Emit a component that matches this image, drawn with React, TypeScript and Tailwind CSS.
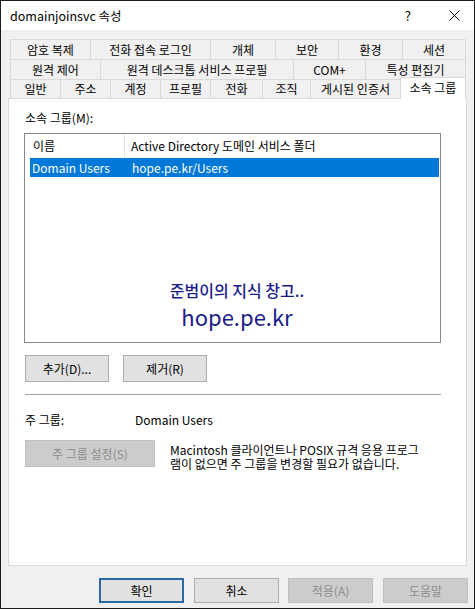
import React from "react";

const row1 = [
  { label: "암호 복제", w: "w-[80px]" },
  { label: "전화 접속 로그인", w: "w-[120px]" },
  { label: "개체", w: "w-[65px]" },
  { label: "보안", w: "w-[63px]" },
  { label: "환경", w: "w-[64px]" },
  { label: "세션", w: "w-[64px]" },
];

const row2 = [
  { label: "원격 제어", w: "w-[90px]" },
  { label: "원격 데스크톱 서비스 프로필", w: "w-[193px]" },
  { label: "COM+", w: "w-[72px]" },
  { label: "특성 편집기", w: "w-[101px]" },
];

const row3 = [
  { label: "일반", w: "w-[50px]" },
  { label: "주소", w: "w-[50px]" },
  { label: "계정", w: "w-[50px]" },
  { label: "프로필", w: "w-[50px]" },
  { label: "전화", w: "w-[52px]" },
  { label: "조직", w: "w-[48px]" },
  { label: "게시된 인증서", w: "w-[90px]" },
];

type Tab = { label: string; w: string };

const TabRow = ({ tabs, h, last }: { tabs: Tab[]; h: string; last?: boolean }) => (
  <div className="flex">
    {tabs.map((t, i) => (
      <div
        key={t.label}
        className={`${t.w} ${h} flex items-center justify-center border-l border-t border-[#d9d9d9] ${
          last && i === tabs.length - 1 ? "border-r" : ""
        }`}
      >
        {t.label}
      </div>
    ))}
  </div>
);

const App = () => {
  return (
    <div className="w-[475px] h-[609px] border border-[#1a1a1a] bg-[#f0f0f0] flex flex-col text-[12px] leading-[16px] text-black font-['Noto_Sans_CJK_KR',sans-serif]">
      {/* title bar */}
      <div className="h-[29px] bg-white flex items-center shrink-0">
        <div className="pl-[9px] text-[12.5px]">domainjoinsvc 속성</div>
        <div className="ml-auto flex items-center">
          <span className="text-[13px] mr-[38px]">?</span>
          <svg width="11" height="11" viewBox="0 0 11 11" className="mr-[14px]">
            <path d="M0.5 0.5 L10.5 10.5 M10.5 0.5 L0.5 10.5" stroke="#000" strokeWidth="1" />
          </svg>
        </div>
      </div>

      <div className="pl-[7px] pt-[9px] flex flex-col">
        {/* tabs */}
        <div className="ml-[2px] w-[456px]">
          <TabRow tabs={row1} h="h-[20px]" last />
          <TabRow tabs={row2} h="h-[20px]" last />
          <div className="flex items-end h-[19px]">
            {row3.map((t) => (
              <div
                key={t.label}
                className={`${t.w} h-[19px] flex items-center justify-center border-l border-t border-[#d9d9d9]`}
              >
                {t.label}
              </div>
            ))}
            <div className="w-[66px] h-[22px] -mb-[1px] relative z-10 bg-white border-l border-t border-r border-[#d9d9d9] flex items-center justify-center pb-[1px]">
              소속 그룹
            </div>
          </div>
        </div>

        {/* panel */}
        <div className="w-[459px] h-[468px] bg-white border border-[#d9d9d9] pl-[15px] flex flex-col">
          <div className="mt-[11px] pl-[1px]">소속 그룹(M):</div>

          <div className="mt-[7px] w-[417px] h-[210px] border border-[#828790] relative">
            <div className="flex h-[24px] items-center">
              <div className="w-[100px] h-full pl-[8px] flex items-center border-r border-[#e5e5e5]">이름</div>
              <div className="pl-[6px]">Active Directory 도메인 서비스 폴더</div>
            </div>
            <div className="ml-[5px] mr-[1px] h-[19px] bg-[#0078d7] text-white flex items-center">
              <div className="w-[102px] pl-[2px]">Domain Users</div>
              <div>hope.pe.kr/Users</div>
            </div>

            {/* watermark */}
            <div className="absolute left-0 right-0 top-[145px] pl-[9px] flex flex-col items-center text-[#1c1c8c]">
              <div className="text-[16px] leading-[22px] font-medium">준범이의 지식 창고..</div>
              <div className="text-[22px] leading-[28px] mt-[1px]">hope.pe.kr</div>
            </div>
          </div>

          <div className="mt-[12px] flex pl-[1px]">
            <button className="w-[84px] h-[27px] bg-[#e1e1e1] border border-[#adadad]">추가(D)...</button>
            <button className="w-[84px] h-[27px] ml-[14px] bg-[#e1e1e1] border border-[#adadad]">제거(R)</button>
          </div>

          <div className="mt-[12px] ml-[1px] w-[416px] h-px bg-[#a0a0a0]" />

          <div className="mt-[17px] flex pl-[1px]">
            <div className="w-[110px]">주 그룹:</div>
            <div>Domain Users</div>
          </div>

          <div className="mt-[12px] flex pl-[1px]">
            <button className="w-[130px] h-[27px] bg-[#cccccc] border border-[#bfbfbf] text-[#8c8c8c] shrink-0">
              주 그룹 설정(S)
            </button>
            <div className="ml-[15px] mt-[3px] flex flex-col">
              <div className="h-[14px] leading-[14px]">Macintosh 클라이언트나 POSIX 규격 응용 프로그</div>
              <div className="h-[14px] leading-[14px]">램이 없으면 주 그룹을 변경할 필요가 없습니다.</div>
            </div>
          </div>
        </div>

        {/* dialog buttons */}
        <div className="mt-[12px] flex ml-[91px]">
          <button className="w-[85px] h-[25px] bg-[#e1e1e1] border-2 border-[#2a6aa0]">확인</button>
          <button className="w-[85px] h-[25px] ml-[10px] bg-[#e1e1e1] border border-[#adadad]">취소</button>
          <button className="w-[85px] h-[25px] ml-[9px] bg-[#cccccc] border border-[#bfbfbf] text-[#8c8c8c]">적용(A)</button>
          <button className="w-[85px] h-[25px] ml-[10px] bg-[#cccccc] border border-[#bfbfbf] text-[#8c8c8c]">도움말</button>
        </div>
      </div>
    </div>
  );
};

export default App;
